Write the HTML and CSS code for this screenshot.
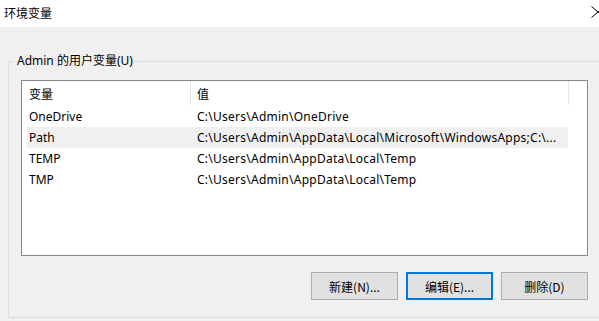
FILE: index.html
```html
<!DOCTYPE html>
<html lang="zh-CN">
<head>
<meta charset="utf-8">
<title>环境变量</title>
<link rel="stylesheet" href="styles.css">
</head>
<body>
<div class="window">
  <div class="titlebar">
    <span class="title">环境变量</span>
    <svg class="close" width="16" height="14" viewBox="0 0 16 14" aria-hidden="true">
      <path d="M0.5 1.5 L13.5 12.5 M0.5 12.5 L13.5 1.5" stroke="#000" stroke-width="1" fill="none"/>
    </svg>
  </div>
  <fieldset class="group">
    <legend class="group-label">Admin 的用户变量(U)</legend>
    <div class="list">
      <div class="list-head">
        <div class="hcell hcell-name">变量</div>
        <div class="hcell hcell-value">值</div>
      </div>
      <div class="row">
        <div class="cell cell-name">OneDrive</div>
        <div class="cell cell-value">C:\Users\Admin\OneDrive</div>
      </div>
      <div class="row row-hover">
        <div class="cell cell-name">Path</div>
        <div class="cell cell-value">C:\Users\Admin\AppData\Local\Microsoft\WindowsApps;C:\...</div>
      </div>
      <div class="row">
        <div class="cell cell-name">TEMP</div>
        <div class="cell cell-value">C:\Users\Admin\AppData\Local\Temp</div>
      </div>
      <div class="row">
        <div class="cell cell-name">TMP</div>
        <div class="cell cell-value">C:\Users\Admin\AppData\Local\Temp</div>
      </div>
    </div>
    <div class="buttons">
      <button class="btn">新建(N)...</button>
      <button class="btn btn-default">编辑(E)...</button>
      <button class="btn">删除(D)</button>
    </div>
  </fieldset>
</div>
</body>
</html>
```

FILE: styles.css
```css
html, body {
  margin: 0;
  padding: 0;
  background: #f0f0f0;
  overflow: hidden;
}
body {
  width: 599px;
  height: 321px;
  font-family: "Noto Sans", "Noto Sans CJK SC", sans-serif;
  font-size: 12px;
  color: #000;
}
.window {
  width: 599px;
  height: 321px;
  overflow: hidden;
}
.titlebar {
  height: 27px;
  background: #fff;
  display: flex;
  align-items: center;
  justify-content: space-between;
  padding-left: 4px;
  overflow: hidden;
}
.title {
  font-family: "Noto Sans CJK SC", sans-serif;
  font-size: 12px;
  line-height: 16px;
  margin-top: -1px;
}
.close {
  flex: none;
  margin-right: -8px;
  margin-top: -3px;
}
.group {
  margin: 26px 0 0 8px;
  width: 620px;
  padding: 11px 0 17px 12px;
  border: 1px solid #dcdcdc;
  box-sizing: border-box;
  height: 265px;
}
.group-label {
  margin-left: -6px;
  padding: 0 2px;
  line-height: 16px;
  font-family: "Noto Sans", "Noto Sans CJK SC", sans-serif;
}
.list {
  width: 567px;
  height: 176px;
  box-sizing: border-box;
  border: 1px solid #828790;
  background: #fff;
  overflow: hidden;
}
.list-head {
  display: flex;
  height: 25px;
  align-items: stretch;
}
.hcell {
  box-sizing: border-box;
  border-right: 1px solid #e5e5e5;
  height: 24px;
  display: flex;
  align-items: center;
  font-family: "Noto Sans CJK SC", sans-serif;
}
.hcell-name {
  width: 169px;
  padding-left: 7px;
}
.hcell-value {
  width: 378px;
  padding-left: 6px;
}
.row {
  display: flex;
  height: 21px;
  align-items: center;
  margin-left: 5px;
  width: 541px;
  white-space: nowrap;
}
.row-hover {
  background: #f0f0f0;
}
.cell {
  overflow: hidden;
  white-space: nowrap;
}
.cell-name {
  width: 163px;
  padding-left: 2px;
  box-sizing: border-box;
}
.cell-value {
  flex: 1;
  padding-left: 7px;
  letter-spacing: 0.25px;
}
.buttons {
  display: flex;
  justify-content: flex-end;
  gap: 8px;
  width: 567px;
  margin-top: 16px;
}
.btn {
  width: 87px;
  height: 28px;
  box-sizing: border-box;
  background: #e1e1e1;
  border: 1px solid #adadad;
  border-radius: 0;
  font-family: "Noto Sans CJK SC", "Noto Sans", sans-serif;
  font-size: 12px;
  color: #000;
  padding: 0;
  margin: 0;
}
.btn-default {
  border: 2px solid #0078d7;
}
```
